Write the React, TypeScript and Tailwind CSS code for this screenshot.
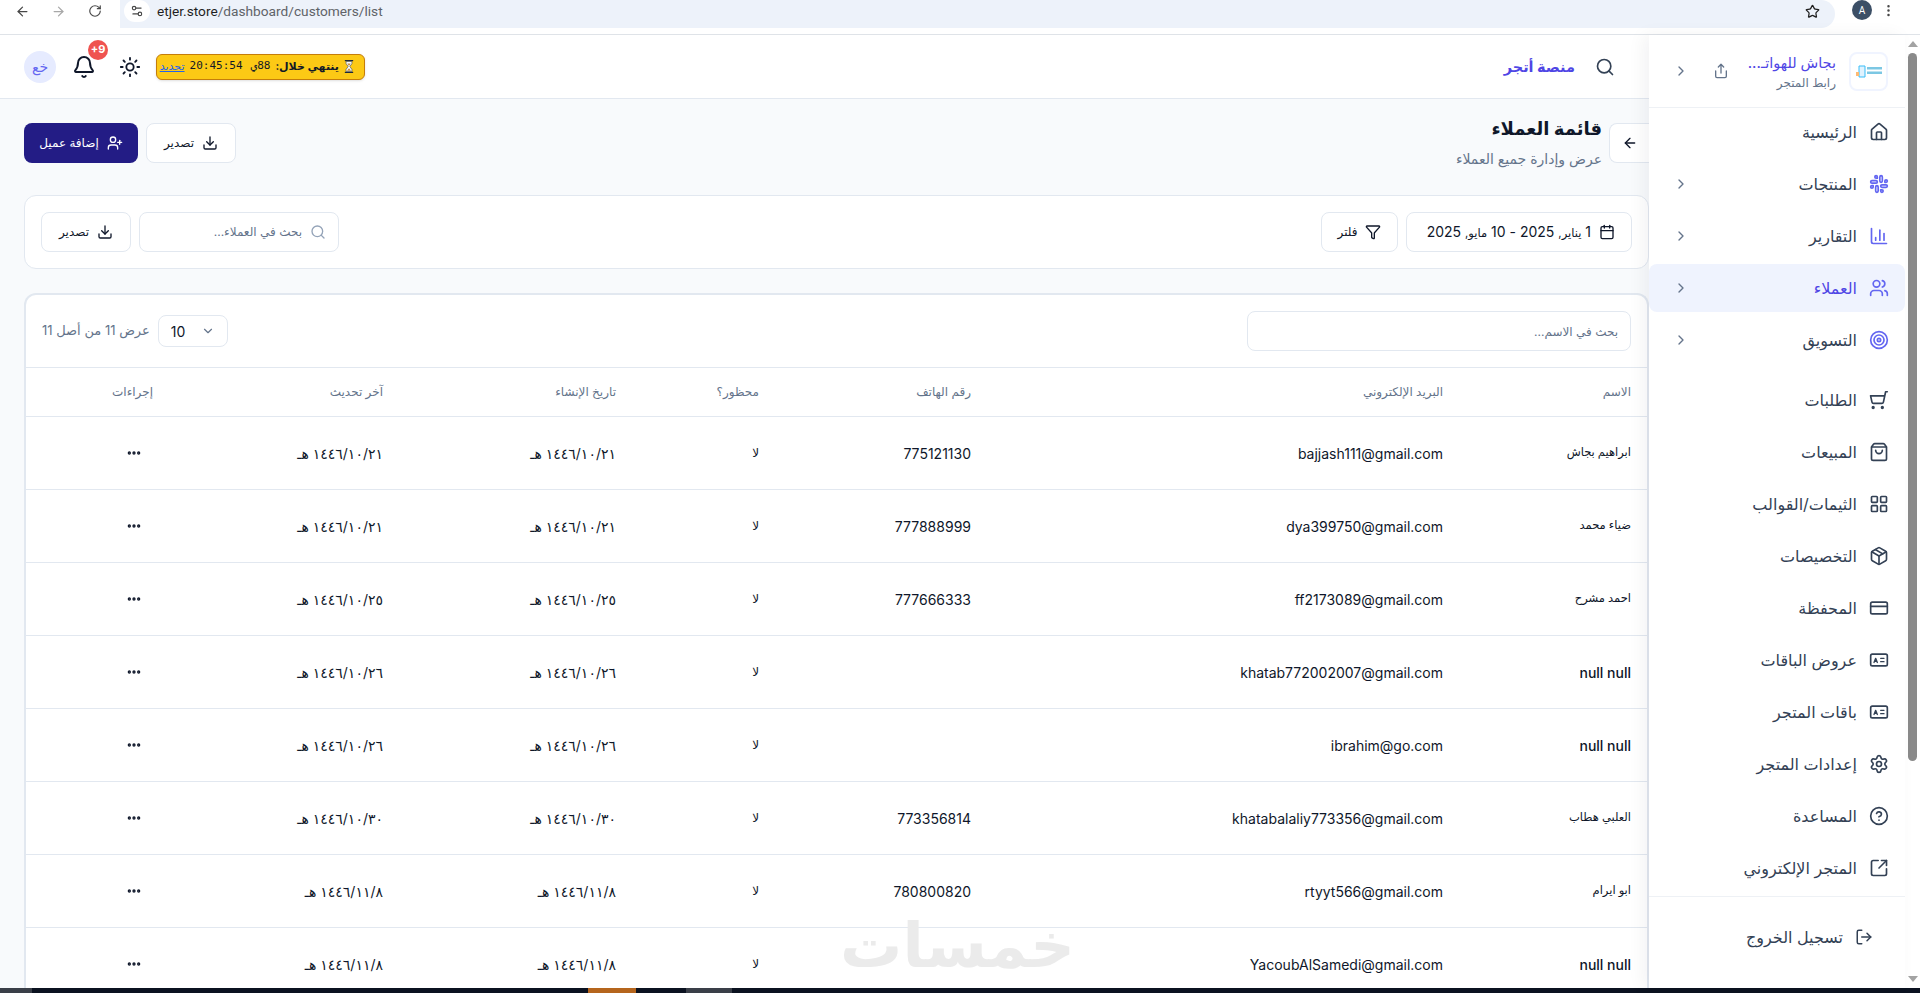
import React from "react";
import {
  ArrowLeft, ArrowRight, RotateCw, Settings2, Star, EllipsisVertical, Search, Bell, Sun, Download, UserPlus,
  Calendar, Funnel, ChevronDown, ChevronRight, Ellipsis, Share, House, Slack, ChartColumn, Users, Target, ShoppingCart,
  ShoppingBag, LayoutGrid, Package, CreditCard, Settings, CircleHelp, SquareArrowOutUpRight, LogOut,
} from "lucide-react";

const rows = [
  ["ابراهيم بجاش", "bajjash111@gmail.com", "775121130", "١٤٤٦/١٠/٢١ هـ"],
  ["ضياء محمد", "dya399750@gmail.com", "777888999", "١٤٤٦/١٠/٢١ هـ"],
  ["احمد مشرح", "ff2173089@gmail.com", "777666333", "١٤٤٦/١٠/٢٥ هـ"],
  ["null null", "khatab772002007@gmail.com", "", "١٤٤٦/١٠/٢٦ هـ"],
  ["null null", "ibrahim@go.com", "", "١٤٤٦/١٠/٢٦ هـ"],
  ["العلبي هطاب", "khatabalaliy773356@gmail.com", "773356814", "١٤٤٦/١٠/٣٠ هـ"],
  ["ابو ايرام", "rtyyt566@gmail.com", "780800820", "١٤٤٦/١١/٨ هـ"],
  ["null null", "YacoubAlSamedi@gmail.com", "", "١٤٤٦/١١/٨ هـ"],
];

function PlanCard({ size = 20, className = "" }: { size?: number; className?: string }) {
  return (
    <svg width={size} height={size} viewBox="0 0 24 24" fill="none" stroke="currentColor" strokeWidth="2" strokeLinecap="round" strokeLinejoin="round" className={className}>
      <rect x="2" y="5" width="20" height="14" rx="2" />
      <path d="M6 15l2-5 2 5M6.8 13.5h2.4" strokeWidth="1.6" />
      <path d="M14 10h4M14 14h4" strokeWidth="1.6" />
    </svg>
  );
}

const navTop = [
  { label: "الرئيسية", Icon: House, chev: false, tint: false },
  { label: "المنتجات", Icon: Slack, chev: true, tint: true },
  { label: "التقارير", Icon: ChartColumn, chev: true, tint: true },
  { label: "العملاء", Icon: Users, chev: true, tint: true, active: true },
  { label: "التسويق", Icon: Target, chev: true, tint: true },
];

const navBottom: { label: string; Icon: React.ComponentType<{ size?: number; className?: string }>; flip?: boolean }[] = [
  { label: "الطلبات", Icon: ShoppingCart, flip: true },
  { label: "المبيعات", Icon: ShoppingBag },
  { label: "الثيمات/القوالب", Icon: LayoutGrid },
  { label: "التخصيصات", Icon: Package },
  { label: "المحفظة", Icon: CreditCard },
  { label: "عروض الباقات", Icon: PlanCard },
  { label: "باقات المتجر", Icon: PlanCard },
  { label: "إعدادات المتجر", Icon: Settings },
  { label: "المساعدة", Icon: CircleHelp },
  { label: "المتجر الإلكتروني", Icon: SquareArrowOutUpRight },
];

function ExportButton() {
  return (
    <button className="flex h-[40px] w-[90px] items-center justify-center gap-2 rounded-lg border border-[#e2e8f0] bg-white text-[12px] text-[#0f172a]">
      <Download size={16} />
      <span>تصدير</span>
    </button>
  );
}

function BrowserBar() {
  return (
    <div dir="ltr" className="flex h-[35px] shrink-0 items-start border-b border-[#dfe3e8] bg-white text-[#474747]">
      <div className="flex h-[22px] items-center pl-[15px]">
        <ArrowLeft size={15} strokeWidth={2} />
        <ArrowRight size={15} strokeWidth={2} className="ml-[21px] text-[#a8a8a8]" />
        <RotateCw size={14} strokeWidth={2} className="ml-[22px]" />
      </div>
      <div className="ml-[18px] flex h-[28px] w-[1715px] items-start rounded-r-full rounded-bl-[22px] bg-[#edf2fa] pl-[4px]">
        <div className="flex h-[22px] w-[26px] items-center justify-center rounded-full bg-white">
          <Settings2 size={14} />
        </div>
        <span className="ml-[7px] font-['Roboto',sans-serif] text-[13.7px] leading-[22px] text-[#1f1f1f]">
          etjer.store<span className="text-[#5f6368]">/dashboard/customers/list</span>
        </span>
        <Star size={15} className="ml-auto mr-[15px] mt-[4px] text-[#1f1f1f]" />
      </div>
      <div className="ml-[17px] flex h-[20px] w-[20px] items-center justify-center rounded-full bg-[#3c4f66] font-['Roboto',sans-serif] text-[10px] text-white">
        A
      </div>
      <EllipsisVertical size={15} className="ml-[9px] mt-[3px]" />
    </div>
  );
}

function Sidebar() {
  return (
    <aside className="relative z-10 flex w-[256px] shrink-0 flex-col bg-white shadow-[-6px_0_16px_rgba(15,23,42,0.05)]">
      <div className="flex h-[73px] shrink-0 items-center border-b border-[#eef1f5] pl-[24px] pr-[17px]">
        <div className="flex h-[39px] w-[39px] shrink-0 items-center justify-center rounded-lg border-2 border-[#f0f4ff]">
          <svg viewBox="0 0 28 14" className="h-[14px] w-[28px]">
            <path d="M4 2h6v11H4z" fill="#e0f2fe" stroke="#38bdf8" strokeWidth="1" />
            <rect x="1" y="8" width="3" height="4" fill="#fdba74" />
            <rect x="12" y="3" width="15" height="2.5" fill="#7cc7e3" />
            <rect x="12" y="7.5" width="15" height="2.5" fill="#7cc7e3" />
          </svg>
        </div>
        <div className="mr-[13px] flex flex-col whitespace-nowrap">
          <div className="text-[14.5px] font-medium leading-[24px] text-[#4f46e5]">بجاش للهواتـ...</div>
          <div className="text-[12px] leading-[16px] text-[#64748b]">رابط المتجر</div>
        </div>
        <Share size={16} className="mr-auto text-[#64748b]" />
        <ChevronRight size={16} className="mr-[24px] text-[#64748b]" />
      </div>
      <nav className="flex flex-col gap-[4px]">
        {navTop.map(({ label, Icon, chev, tint, active }) => (
          <div
            key={label}
            className={active ? "flex h-[48px] items-center rounded-lg bg-[#eff3fe] pl-[24px] pr-[16px] text-[#4f46e5]" : "flex h-[48px] items-center rounded-lg pl-[24px] pr-[16px] text-[#334155]"}
          >
            <Icon size={20} className={tint ? "text-[#6366f1]" : "text-[#334155]"} />
            <span className="mr-[12px] text-[16px]">{label}</span>
            {chev && <ChevronRight size={16} className="mr-auto text-[#64748b]" />}
          </div>
        ))}
      </nav>
      <nav className="mt-[12px] flex flex-col gap-[4px]">
        {navBottom.map(({ label, Icon, flip }) => (
          <div key={label} className="flex h-[48px] items-center pl-[16px] pr-[16px] text-[#334155]">
            <Icon size={20} className={flip ? "-scale-x-100" : ""} />
            <span className="mr-[12px] text-[16px]">{label}</span>
          </div>
        ))}
      </nav>
      <div className="mt-[4px] border-t border-[#eef1f5] pr-[32px] pt-[28px]">
        <div className="flex h-[24px] items-center text-[#334155]">
          <LogOut size={18} />
          <span className="mr-[12px] text-[16px]">تسجيل الخروج</span>
        </div>
      </div>
    </aside>
  );
}

function TopBar() {
  return (
    <header className="flex h-[64px] shrink-0 items-center justify-between border-b border-[#e2e8f0] bg-white pl-[24px] pr-[34px]">
      <div className="flex items-center gap-[20px]">
        <Search size={20} className="text-[#334155]" />
        <span className="text-[14.5px] font-bold text-[#4f46e5]">منصة أتجر</span>
      </div>
      <div dir="ltr" className="flex items-center">
        <div className="flex h-[32px] w-[32px] items-center justify-center rounded-full bg-[#e6ebff] text-[14px] text-[#6366f1]">خع</div>
        <div className="relative ml-[16px] h-[24px] w-[24px]">
          <Bell size={24} className="text-[#0f172a]" />
          <span className="absolute -right-[12px] -top-[15px] flex h-[20px] w-[20px] items-center justify-center rounded-full bg-[#ef5350] text-[11px] font-bold text-white">+9</span>
        </div>
        <Sun size={22} className="ml-[23px] text-[#0f172a]" />
        <div dir="rtl" className="ml-[15px] flex h-[26px] w-[209px] items-center gap-[5px] whitespace-nowrap rounded-[6px] border border-[#c57d0a] bg-[#fcc915] pr-[10px] text-[11px] text-[#111827] shadow-sm">
          <svg viewBox="0 0 12 16" className="h-[15px] w-[10px] shrink-0">
            <path d="M1 1h10M1 15h10" stroke="#1f2937" strokeWidth="1.6" />
            <path d="M2.5 2h7v2.5L7 8l2.5 3.5V14h-7v-2.5L5 8 2.5 4.5z" fill="#f8fafc" stroke="#475569" strokeWidth="0.8" />
            <path d="M4 4.5h4L6 7.5zM3.5 13.2 6 10l2.5 3.2z" fill="#c58a3d" />
          </svg>
          <span className="font-bold">ينتهي خلال:</span>
          <span className="font-['DejaVu_Sans_Mono',monospace]">88ي</span>
          <span className="mr-[3px] font-['DejaVu_Sans_Mono',monospace]">20:45:54</span>
          <span className="text-[#2563eb] underline">تجديد</span>
        </div>
      </div>
    </header>
  );
}

function CustomersTable() {
  return (
    <section className="mt-[24px] rounded-tl-xl rounded-tr-xl border-2 border-b-0 border-[#e2e8f0] bg-white">
      <div className="flex h-[72px] items-center justify-between px-[16px]">
        <input
          placeholder="بحث في الاسم..."
          className="h-[40px] w-[384px] rounded-lg border border-[#e2e8f0] bg-white px-[12px] text-[12px] placeholder:text-[#64748b]"
        />
        <div className="flex items-center gap-[8px]">
          <div dir="ltr" className="flex h-[32px] w-[70px] items-center justify-between rounded-lg border border-[#e2e8f0] px-[12px] text-[14px] text-[#0f172a]">
            <span>10</span>
            <ChevronDown size={14} className="text-[#64748b]" />
          </div>
          <span className="text-[13px] text-[#64748b]">عرض 11 من أصل 11</span>
        </div>
      </div>
      <table className="w-full table-fixed border-collapse text-right">
        <colgroup>
          <col className="w-[188px]" />
          <col className="w-[472px]" />
          <col className="w-[212px]" />
          <col className="w-[143px]" />
          <col className="w-[233px]" />
          <col className="w-[230px]" />
          <col />
        </colgroup>
        <thead>
          <tr className="h-[49px] border-y border-[#e2e8f0] text-[12px] text-[#64748b]">
            {["الاسم", "البريد الإلكتروني", "رقم الهاتف", "محظور؟", "تاريخ الإنشاء", "آخر تحديث", "إجراءات"].map((h) => (
              <th key={h} className="pr-[16px] font-normal">{h}</th>
            ))}
          </tr>
        </thead>
        <tbody>
          {rows.map(([name, email, phone, date], i) => (
            <tr key={i} className="h-[73px] border-b border-[#e2e8f0] text-[14px] text-[#0f172a]">
              <td className={name === "null null" ? "pr-[16px] font-medium" : "pr-[16px] text-[11.5px] font-medium"}>{name}</td>
              <td dir="ltr" className="pr-[16px] text-right">{email}</td>
              <td className="pr-[16px]">{phone}</td>
              <td className="pr-[16px] text-[12px]">لا</td>
              <td className="pr-[16px] text-[14px]">{date}</td>
              <td className="pr-[16px] text-[14px]">{date}</td>
              <td className="pr-[16px]"><Ellipsis size={16} strokeWidth={3} className="mr-[11px]" /></td>
            </tr>
          ))}
        </tbody>
      </table>
    </section>
  );
}

function Main() {
  return (
    <main className="relative flex min-w-0 flex-1 flex-col overflow-hidden bg-[#f8fafc]">
      <TopBar />
      <div className="pl-[24px]">
        <div className="mt-[24px] flex h-[40px] items-start justify-between">
          <div className="flex items-start gap-[7px]">
            <button className="flex h-[40px] w-[40px] items-center justify-center rounded-l-lg border border-r-0 border-[#e2e8f0] bg-white">
              <ArrowLeft size={16} className="text-[#0f172a]" />
            </button>
            <div className="-mt-[8px]">
              <h1 className="text-[18px] font-bold leading-[28px] text-[#0f172a]">قائمة العملاء</h1>
              <p className="mt-[6px] text-[14px] leading-[20px] text-[#64748b]">عرض وإدارة جميع العملاء</p>
            </div>
          </div>
          <div className="flex items-center gap-[8px]">
            <ExportButton />
            <button className="flex h-[40px] w-[114px] items-center justify-center gap-2 rounded-lg bg-[#231c85] text-[12px] text-white">
              <UserPlus size={16} />
              <span>إضافة عميل</span>
            </button>
          </div>
        </div>
        <section className="mt-[32px] flex h-[74px] items-center justify-between rounded-xl border border-[#e2e8f0] bg-white px-[16px]">
          <div className="flex items-center gap-[8px]">
            <div className="flex h-[40px] w-[226px] items-center gap-[8px] rounded-lg border border-[#e2e8f0] pr-[16px] text-[14px] text-[#0f172a]">
              <Calendar size={16} className="shrink-0" />
              <span className="whitespace-nowrap">1 <span className="text-[11.5px]">يناير,</span> 2025 - 10 <span className="text-[11.5px]">مايو,</span> 2025</span>
            </div>
            <div className="flex h-[40px] w-[77px] items-center justify-center gap-[8px] rounded-lg border border-[#e2e8f0] text-[12px] text-[#0f172a]">
              <Funnel size={16} />
              <span>فلتر</span>
            </div>
          </div>
          <div className="flex items-center gap-[8px]">
            <div className="flex h-[40px] w-[200px] items-center gap-[8px] rounded-lg border border-[#e2e8f0] pr-[12px] text-[12px] text-[#64748b]">
              <Search size={16} className="text-[#94a3b8]" />
              <span>بحث في العملاء...</span>
            </div>
            <ExportButton />
          </div>
        </section>
        <CustomersTable />
      </div>
    </main>
  );
}

export default function App() {
  return (
    <div className="relative flex h-[993px] w-[1920px] flex-col overflow-hidden bg-white font-['Inter','DejaVu_Sans',sans-serif]">
      <BrowserBar />
      <div dir="rtl" className="flex min-h-0 flex-1">
        <div className="flex w-[15px] shrink-0 flex-col items-center bg-white">
          <div className="mt-[6px] h-0 w-0 border-x-[5px] border-b-[6px] border-x-transparent border-b-[#a3a3a3]" />
          <div className="mt-[6px] h-[708px] w-[9px] rounded-full bg-[#8a8a8a]" />
          <div className="mb-[6px] mt-auto h-0 w-0 border-x-[5px] border-t-[6px] border-x-transparent border-t-[#a3a3a3]" />
        </div>
        <Sidebar />
        <Main />
      </div>
      <div dir="ltr" className="flex h-[5px] shrink-0 bg-[#0b1220]">
        <div className="h-full w-[32px] bg-[#3a3f48]" />
        <div className="ml-[556px] h-full w-[48px] bg-[#b5651d]" />
        <div className="ml-[50px] h-full w-[46px] bg-[#3a3f48]" />
      </div>
      <div dir="rtl" className="pointer-events-none absolute left-[843px] top-[905px] w-[232px] whitespace-nowrap text-center text-[62px] font-bold leading-[80px] text-[#ebebeb]">
        خمسات
      </div>
    </div>
  );
}
